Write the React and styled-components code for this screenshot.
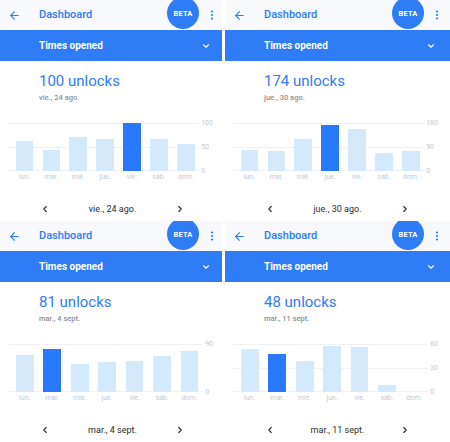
import React from "react";
import styled, { createGlobalStyle } from "styled-components";
import { ArrowLeft, ChevronDown, ChevronLeft, ChevronRight } from "lucide-react";

const Global = createGlobalStyle`
  html, body { margin: 0; padding: 0; background: #ffffff; }
  body { font-family: Roboto, "Noto Sans", Arial, sans-serif; }
  * { box-sizing: border-box; }
`;

const BLUE = "#2e7cf6";

const Grid = styled.div`
  display: grid;
  grid-template-columns: 222px 225px;
  grid-template-rows: 218px 218px;
  column-gap: 3px;
  row-gap: 3px;
  width: 450px;
  height: 442px;
  overflow: hidden;
  background: #ffffff;
`;

const Cell = styled.div`
  overflow: hidden;
  position: relative;
`;

const Panel = styled.section`
  width: 225px;
  height: 218px;
  display: flex;
  flex-direction: column;
  background: #ffffff;
`;

const Header = styled.header`
  position: relative;
  height: 30px;
  flex: 0 0 30px;
  display: flex;
  align-items: center;
  padding: 0 11px 0 8px;
  background: #f7f9fc;
  color: ${BLUE};
`;

const IconBox = styled.span`
  display: inline-flex;
  align-items: center;
  justify-content: center;
  color: ${(p) => p.$color || "inherit"};
`;

const HeaderTitle = styled.h1`
  margin: 0 0 0 18px;
  font-size: 11px;
  font-weight: 500;
  color: ${BLUE};
  flex: 1;
  line-height: 14px;
`;

const Beta = styled.div`
  position: absolute;
  left: 167px;
  top: -3px;
  width: 32px;
  height: 32px;
  border-radius: 50%;
  background: ${BLUE};
  color: #ffffff;
  font-size: 7.5px;
  font-weight: 700;
  letter-spacing: 0.2px;
  display: flex;
  align-items: center;
  justify-content: center;
  padding-top: 1px;
`;

const SelectBar = styled.div`
  height: 31px;
  flex: 0 0 31px;
  background: ${BLUE};
  display: flex;
  align-items: center;
  justify-content: space-between;
  padding: 0 14px 0 39px;
  color: #ffffff;
  font-size: 10px;
  font-weight: 700;
`;

const Summary = styled.div`
  padding-left: 39px;
  margin-top: 12px;
  display: flex;
  flex-direction: column;
`;

const Count = styled.div`
  font-size: 15px;
  line-height: 16px;
  color: ${BLUE};
  font-weight: 400;
`;

const DateText = styled.div`
  margin-top: 4px;
  font-size: 7.5px;
  line-height: 9px;
  color: #8d8f93;
  font-weight: 500;
`;

const ChartRow = styled.div`
  margin-top: 21px;
  display: flex;
  align-items: flex-start;
  padding: 0 12px 0 8px;
  gap: 2px;
`;

const ChartMain = styled.div`
  flex: 1;
  display: flex;
  flex-direction: column;
`;

const Plot = styled.div`
  position: relative;
  height: 48px;
`;

const GridLayer = styled.div`
  position: absolute;
  inset: 0;
  display: flex;
  flex-direction: column;
  justify-content: space-between;
`;

const GridLine = styled.div`
  height: 1px;
  background: #eef2f7;
`;

const Slots = styled.div`
  position: relative;
  display: flex;
  height: ${(p) => (p.$plot ? "48px" : "auto")};
  align-items: flex-end;
  padding-left: 3px;
  margin-top: ${(p) => (p.$plot ? "0" : "2px")};
`;

const Slot = styled.div`
  flex: 1;
  display: flex;
  justify-content: center;
  align-items: flex-end;
  height: 100%;
`;

const Bar = styled.div`
  width: 65%;
  background: ${(p) => (p.$active ? "#2979ff" : "#d5e9fd")};
`;

const DayLabel = styled.span`
  font-size: 7px;
  line-height: 8px;
  color: #c3cad3;
`;

const Axis = styled.div`
  height: 56px;
  margin-top: -4px;
  display: flex;
  flex-direction: column;
  justify-content: space-between;
`;

const AxisLabel = styled.span`
  font-size: 7px;
  line-height: 8px;
  color: #c3cad3;
`;

const Nav = styled.div`
  margin-top: 20px;
  height: 16px;
  display: flex;
  align-items: center;
  justify-content: space-between;
  padding: 0 40px;
  color: #2b2b2b;
  font-size: 9px;
`;

const Kebab = () => (
  <svg width="4" height="10" viewBox="0 0 4 10" aria-hidden="true">
    <circle cx="2" cy="1.5" r="1.1" fill={BLUE} />
    <circle cx="2" cy="5" r="1.1" fill={BLUE} />
    <circle cx="2" cy="8.5" r="1.1" fill={BLUE} />
  </svg>
);

const DAYS = ["lun.", "mar.", "mié.", "jue.", "vie.", "sáb.", "dom."];

const panels = [
  { count: 100, date: "vie., 24 ago.", ticks: [100, 50, 0], values: [62, 44, 71, 67, 100, 66, 57], active: 4 },
  { count: 174, date: "jue., 30 ago.", ticks: [180, 90, 0], values: [78, 75, 121, 174, 156, 67, 76], active: 3 },
  { count: 81, date: "mar., 4 sept.", ticks: [90, 0], values: [69, 81, 52, 57, 58, 68, 76], active: 1 },
  { count: 48, date: "mar., 11 sept.", ticks: [60, 30, 0], values: [54, 48, 39, 58, 56, 9, 0], active: 1 },
];

function DashboardPanel({ count, date, ticks, values, active }) {
  const max = ticks[0];
  return (
    <Panel>
      <Header>
        <IconBox>
          <ArrowLeft size={13} strokeWidth={2} />
        </IconBox>
        <HeaderTitle>Dashboard</HeaderTitle>
        <Beta>BETA</Beta>
        <IconBox>
          <Kebab />
        </IconBox>
      </Header>
      <SelectBar>
        <span>Times opened</span>
        <IconBox>
          <ChevronDown size={10} strokeWidth={2.6} />
        </IconBox>
      </SelectBar>
      <Summary>
        <Count>{count} unlocks</Count>
        <DateText>{date}</DateText>
      </Summary>
      <ChartRow>
        <ChartMain>
          <Plot>
            <GridLayer>
              {ticks.map((t) => (
                <GridLine key={t} />
              ))}
            </GridLayer>
            <Slots $plot>
              {values.map((v, i) => (
                <Slot key={i}>
                  <Bar $active={i === active} style={{ height: `${(v / max) * 100}%` }} />
                </Slot>
              ))}
            </Slots>
          </Plot>
          <Slots>
            {DAYS.map((d) => (
              <Slot key={d}>
                <DayLabel>{d}</DayLabel>
              </Slot>
            ))}
          </Slots>
        </ChartMain>
        <Axis>
          {ticks.map((t) => (
            <AxisLabel key={t}>{t}</AxisLabel>
          ))}
        </Axis>
      </ChartRow>
      <Nav>
        <IconBox>
          <ChevronLeft size={10} strokeWidth={2.6} />
        </IconBox>
        <span>{date}</span>
        <IconBox>
          <ChevronRight size={10} strokeWidth={2.6} />
        </IconBox>
      </Nav>
    </Panel>
  );
}

export default function App() {
  return (
    <>
      <Global />
      <Grid>
        {panels.map((p, i) => (
          <Cell key={i}>
            <DashboardPanel {...p} />
          </Cell>
        ))}
      </Grid>
    </>
  );
}
